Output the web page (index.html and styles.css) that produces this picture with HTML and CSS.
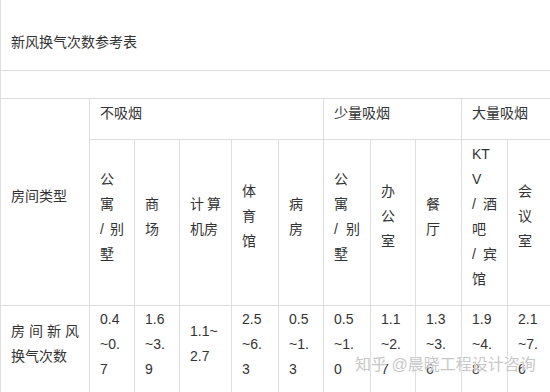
FILE: index.html
```html
<!DOCTYPE html>
<html lang="zh">
<head>
<meta charset="utf-8">
<title>新风换气次数参考表</title>
<link rel="stylesheet" href="styles.css">
</head>
<body>
<div class="page">
<table class="tbl">
  <colgroup>
    <col class="c-label">
    <col class="c45"><col class="c45"><col class="c52"><col class="c47"><col class="c45">
    <col class="c47"><col class="c45"><col class="c46"><col class="c46"><col class="c46">
  </colgroup>
  <tr class="r-title"><td class="title" colspan="11">新风换气次数参考表</td></tr>
  <tr class="r-empty"><td colspan="11"></td></tr>
  <tr class="r-group">
    <td rowspan="2">房间类型</td>
    <td colspan="5">不吸烟</td>
    <td colspan="3">少量吸烟</td>
    <td colspan="2">大量吸烟</td>
  </tr>
  <tr class="r-sub">
    <td>公寓<wbr><span class="nb">/别</span><wbr>墅</td>
    <td>商场</td>
    <td>计算机房</td>
    <td>体育馆</td>
    <td>病房</td>
    <td>公寓<wbr><span class="nb">/别</span><wbr>墅</td>
    <td>办公室</td>
    <td>餐厅</td>
    <td>KTV<wbr><span class="nb">/酒</span><wbr>吧<wbr><span class="nb">/宾</span><wbr>馆</td>
    <td>会议室</td>
  </tr>
  <tr class="r-data">
    <td>房间新风换气次数</td>
    <td>0.4~0.7</td>
    <td>1.6~3.9</td>
    <td>1.1~2.7</td>
    <td>2.5~6.3</td>
    <td>0.5~1.3</td>
    <td>0.5~1.0</td>
    <td>1.1~2.7</td>
    <td>1.3~3.6</td>
    <td>1.9~4.8</td>
    <td>2.1~7.6</td>
  </tr>
</table>
<div class="watermark">知乎 @晨晓工程设计咨询</div>
</div>
</body>
</html>
```

FILE: styles.css
```css
html, body {
  margin: 0;
  padding: 0;
  background: #ffffff;
  overflow: hidden;
}

.page {
  position: relative;
  width: 550px;
  height: 392px;
  overflow: hidden;
  font-family: "Liberation Sans", "Noto Sans CJK SC", sans-serif;
  color: #333333;
}

.tbl {
  border-collapse: collapse;
  table-layout: fixed;
  width: 553px;
  font-size: 14px;
  line-height: 25px;
}

.c-label { width: 89px; }
.c45 { width: 45px; }
.c46 { width: 46px; }
.c47 { width: 47px; }
.c52 { width: 52px; }

.tbl td {
  border: 1px solid #dedede;
  padding: 0 10px 11px 10px;
  vertical-align: middle;
  text-align: justify;
  word-break: break-all;
}

.nb {
  white-space: nowrap;
}

.tbl td.title {
  border-top: 0;
  vertical-align: top;
  padding: 30px 10px 0 10px;
}

.r-title { height: 70px; }
.r-empty { height: 28px; }
.r-group { height: 41px; }
.r-sub { height: 166px; }
.r-data { height: 89px; }

.watermark {
  position: absolute;
  left: 355px;
  top: 353px;
  font-size: 16px;
  line-height: 24px;
  color: #c8c8c8;
  white-space: nowrap;
  text-shadow: 0 0 2px #ffffff, 0 0 1px #ffffff;
  font-family: "Liberation Sans", "Noto Sans CJK SC", sans-serif;
}
```
